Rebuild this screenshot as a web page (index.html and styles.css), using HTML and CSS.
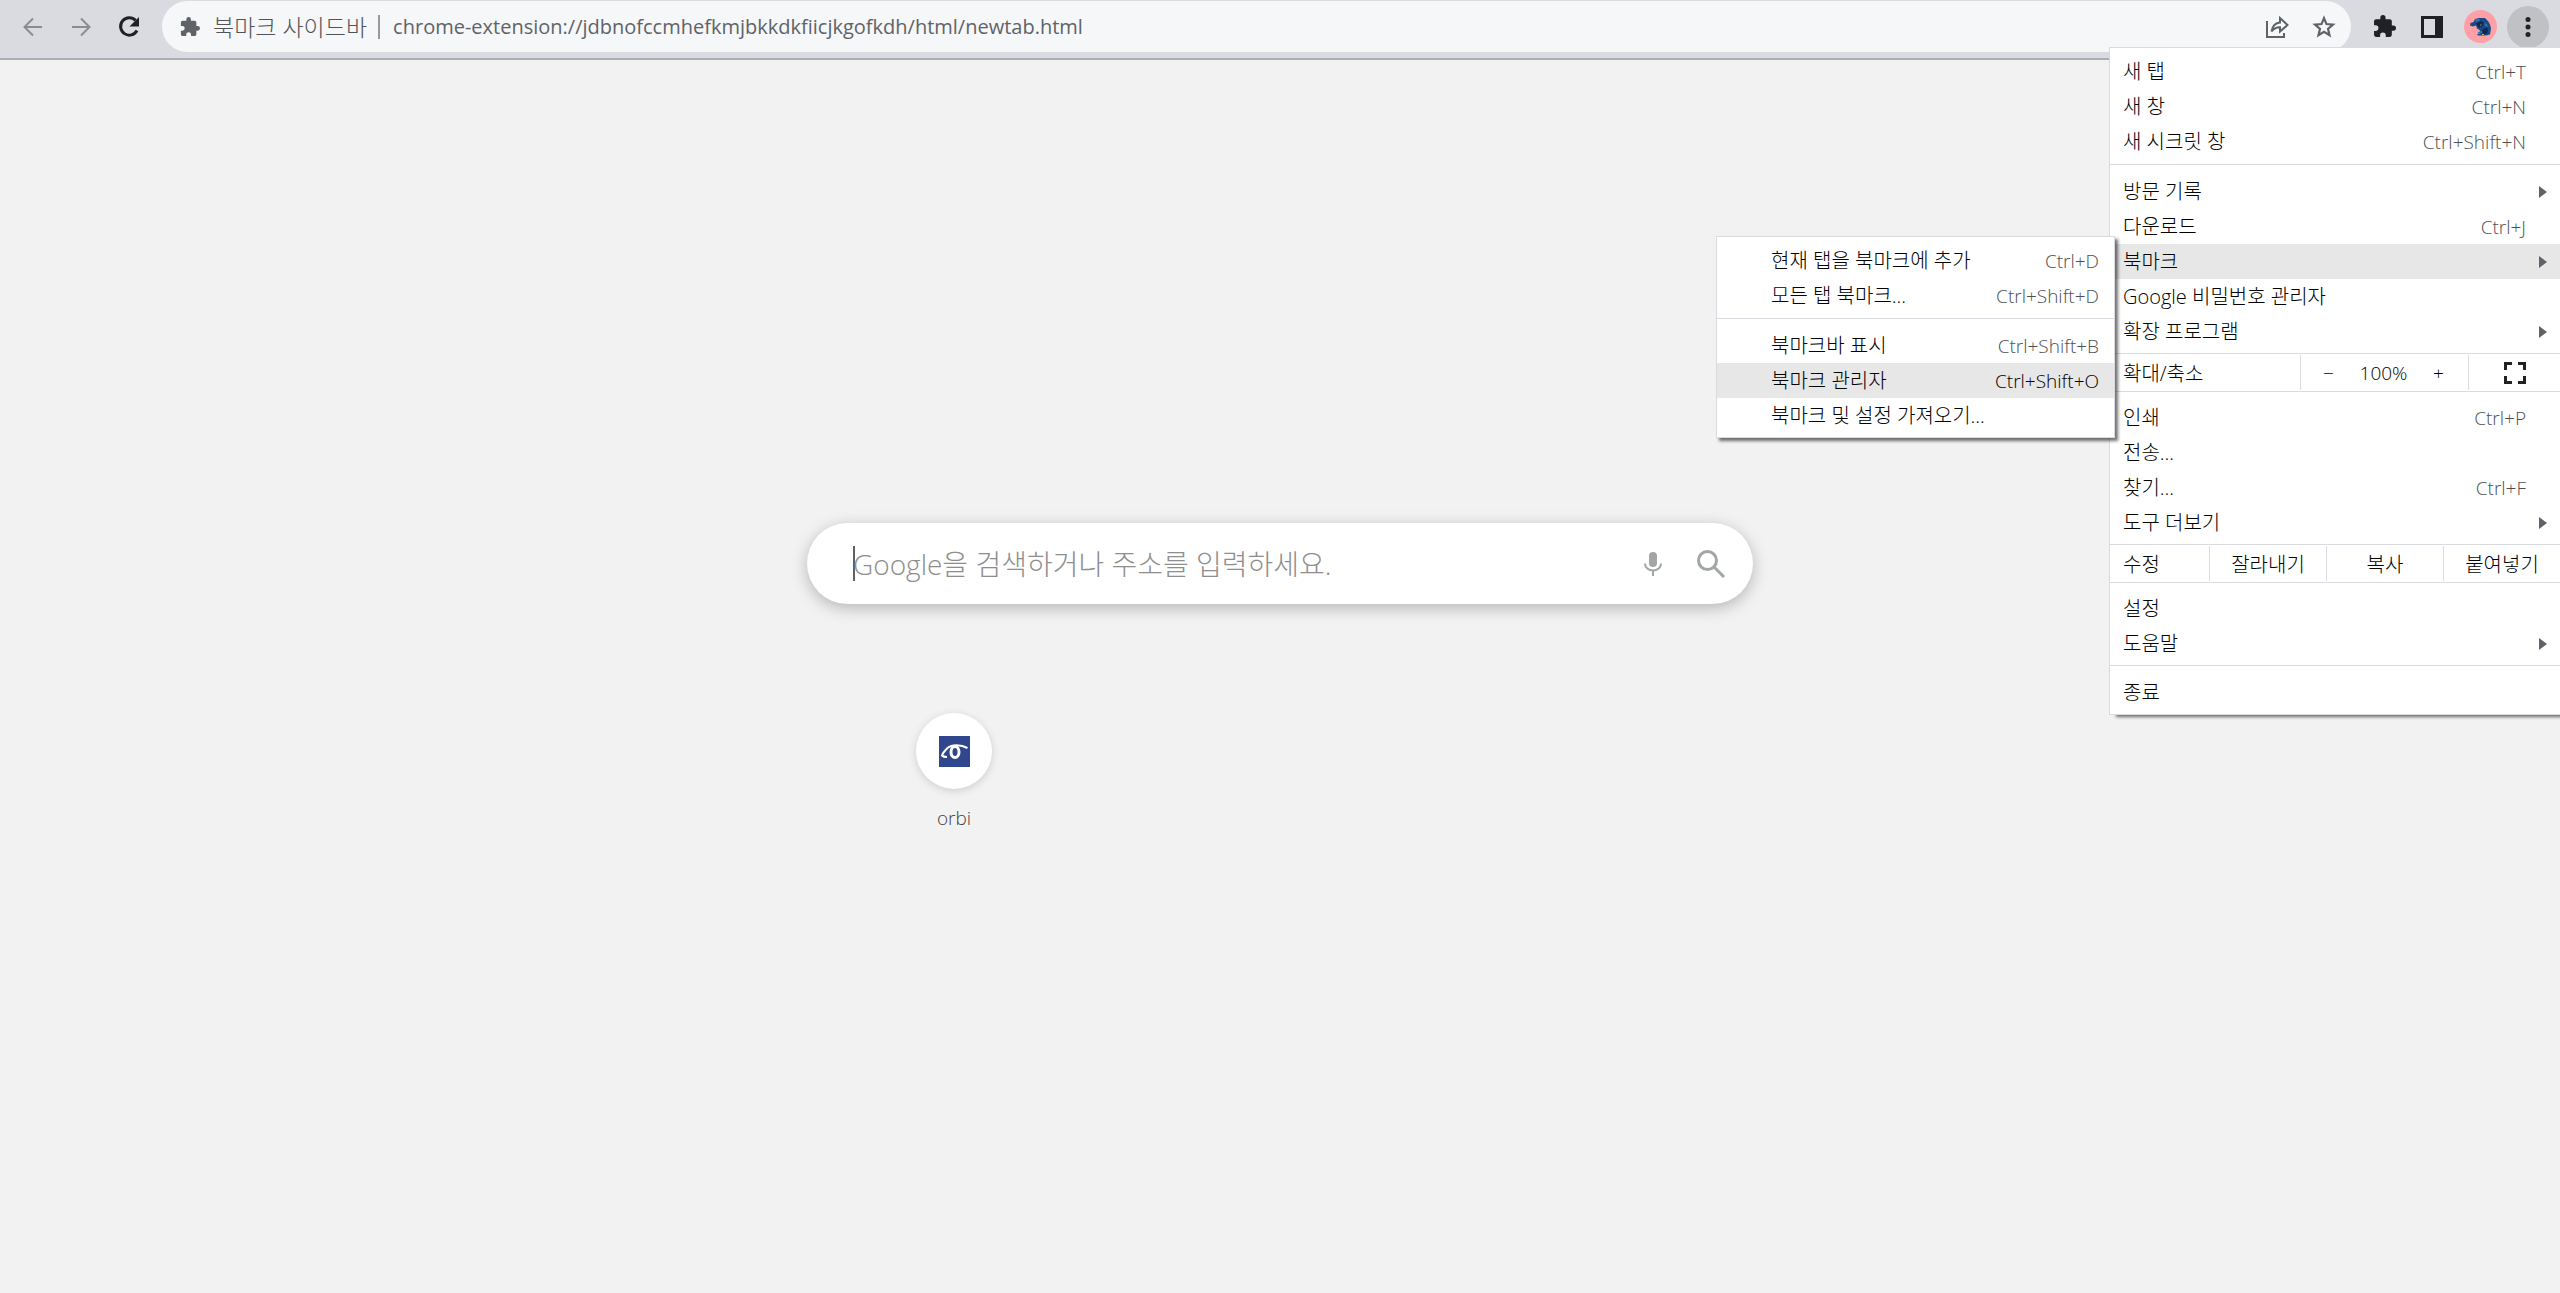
FILE: index.html
```html
<!DOCTYPE html>
<html lang="ko">
<head>
<meta charset="utf-8">
<title>북마크 사이드바</title>
<link rel="stylesheet" href="styles.css">
</head>
<body>
<header class="toolbar">
  <button class="nav-btn muted" aria-label="뒤로"><svg width="22" height="22" viewBox="0 0 22 22"><path d="M20 11H3M11 2.500L2.500 11l8.500 8.500"/></svg></button>
  <button class="nav-btn muted" aria-label="앞으로"><svg width="22" height="22" viewBox="0 0 22 22"><path d="M2 11h17M11 2.500l8.500 8.500-8.500 8.500"/></svg></button>
  <button class="nav-btn" aria-label="새로고침"><svg width="24" height="24" viewBox="0 0 24 24"><path class="reload-arc" d="M18.600 5.400A8.700 8.700 0 1 0 20 15.500"/><path class="solid" d="M22 2v9.500h-9.500z"/></svg></button>
  <div class="omnibox">
    <svg class="ext-icon" width="20" height="20" viewBox="1 1 22 22"><path d="M20.500 11H19V7c0-1.100-.9-2-2-2h-4V3.500a2.500 2.500 0 0 0-5 0V5H4c-1.100 0-2 .9-2 2v3.800h1.500a2.700 2.700 0 0 1 0 5.400H2V20c0 1.100.9 2 2 2h3.800v-1.500a2.700 2.700 0 0 1 5.400 0V22H17c1.100 0 2-.9 2-2v-4h1.500a2.500 2.500 0 0 0 0-5z"/></svg>
    <span class="ext-name">북마크 사이드바</span>
    <span class="divider"></span>
    <input class="url" aria-label="주소" value="chrome-extension://jdbnofccmhefkmjbkkdkfiicjkgofkdh/html/newtab.html">
    <button class="omni-btn" aria-label="공유"><svg width="24" height="24" viewBox="0 0 24 24"><path d="M2 6v16h17v-4M6.500 16.500C7.500 11 10 8 15 7.600V3l7.500 7-7.500 6.500V12.300C11 12.200 8.500 13.800 6.500 16.500z"/></svg></button>
    <button class="omni-btn" aria-label="북마크 추가"><svg width="26" height="26" viewBox="0 0 24 24"><path d="M12 3.800l2.300 5.500 6 .5-4.600 3.900 1.400 5.800-5.100-3.100-5.100 3.100 1.400-5.800-4.600-3.900 6-.5z"/></svg></button>
  </div>
  <div class="actions">
    <button class="action" aria-label="확장 프로그램"><svg width="23" height="23" viewBox="1 1 22 22"><path d="M20.500 11H19V7c0-1.100-.9-2-2-2h-4V3.500a2.500 2.500 0 0 0-5 0V5H4c-1.100 0-2 .9-2 2v3.800h1.500a2.700 2.700 0 0 1 0 5.400H2V20c0 1.100.9 2 2 2h3.800v-1.500a2.700 2.700 0 0 1 5.400 0V22H17c1.100 0 2-.9 2-2v-4h1.500a2.500 2.500 0 0 0 0-5z"/></svg></button>
    <button class="action" aria-label="측면 패널"><svg width="22" height="22" viewBox="0 0 22 22"><path fill-rule="evenodd" d="M0 0h22v22H0zM3 3v16h11V3z"/></svg></button>
    <button class="action" aria-label="프로필"><svg width="33" height="33" viewBox="0 0 33 33"><circle cx="16.500" cy="16.500" r="16.500" fill="#ff9fa6"/><path fill="#174a86" d="M6.500 13l3-1 1.500-3 4-1h6l3 3 2 3.500 1 4-1 6-4 1h-8l-1-1.500 4-1-1.500-3-2.500-1.500-1-3-3 1-3-1z"/><path fill="#0d2a50" d="M12 13l5-2 3 2-1 3-4 2zM18 20l5-3 1 4-1 3h-4z"/><path fill="#2b70b8" d="M11 9.500l4-1 1 2-4 2zM20 13l3 1 1 3-3-1zM14 22l4-1v2h-4z"/><path fill="#e0a92e" d="M16 15l2-1-1.500 2zM18 24h2v1h-2z"/></svg></button>
    <button class="action more" aria-label="Chrome 맞춤설정 및 제어"><svg width="6" height="22" viewBox="0 0 6 22"><circle cx="3" cy="3.500" r="2.500"/><circle cx="3" cy="11" r="2.500"/><circle cx="3" cy="18.500" r="2.500"/></svg></button>
  </div>
</header>

<main class="newtab">
  <form class="search" role="search">
    <input class="search-input" aria-label="검색" placeholder="Google을 검색하거나 주소를 입력하세요." autofocus>
    <button type="button" class="search-btn" aria-label="음성 검색"><svg width="18" height="26" viewBox="0 0 18 26"><rect x="5" y="1" width="8" height="15" rx="4"/><path class="line" d="M1 12.500a8 7 0 0 0 16 0M9 19.500V25"/></svg></button>
    <button type="button" class="search-btn" aria-label="검색"><svg width="30" height="30" viewBox="0 0 30 30"><circle class="lens" cx="11.500" cy="11.500" r="9"/><path class="lens" d="M18 18l10 10"/></svg></button>
  </form>
  <nav class="tiles">
    <a class="tile" href="#">
      <span class="tile-disc"><svg width="31" height="31" viewBox="0 0 31 31"><path fill="#30478e" d="M0 0h31v31H0z"/><path class="eye-line" d="M28.500 12C22 8.500 13 8 8.500 12 5.500 15 3.500 18 3 19.500c1 1.200 3 1.500 5 1.500"/><ellipse class="eye-ball" cx="16" cy="16" rx="4" ry="5.500"/></svg></span>
      <span class="tile-name">orbi</span>
    </a>
  </nav>
</main>

<nav class="menu" aria-label="Chrome 메뉴">
  <div class="group">
    <button class="item">새 탭<kbd>Ctrl+T</kbd></button>
    <button class="item">새 창<kbd>Ctrl+N</kbd></button>
    <button class="item">새 시크릿 창<kbd>Ctrl+Shift+N</kbd></button>
  </div>
  <div class="group">
    <button class="item parent">방문 기록</button>
    <button class="item">다운로드<kbd>Ctrl+J</kbd></button>
    <div class="branch">
      <button class="item parent active">북마크</button>
      <div class="menu submenu">
        <div class="group">
          <button class="item">현재 탭을 북마크에 추가<kbd>Ctrl+D</kbd></button>
          <button class="item">모든 탭 북마크...<kbd>Ctrl+Shift+D</kbd></button>
        </div>
        <div class="group">
          <button class="item">북마크바 표시<kbd>Ctrl+Shift+B</kbd></button>
          <button class="item active">북마크 관리자<kbd>Ctrl+Shift+O</kbd></button>
          <button class="item">북마크 및 설정 가져오기...</button>
        </div>
      </div>
    </div>
    <button class="item">Google 비밀번호 관리자</button>
    <button class="item parent">확장 프로그램</button>
  </div>
  <div class="strip">
    <span class="strip-label">확대/축소</span>
    <div class="zoom">
      <button class="strip-btn" aria-label="축소">−</button>
      <span>100%</span>
      <button class="strip-btn" aria-label="확대">+</button>
    </div>
    <button class="strip-btn fullscreen" aria-label="전체화면"><svg width="22" height="22" viewBox="0 0 22 22"><path d="M1.500 8V1.500H8M14 1.500h6.500V8M20.500 14v6.500H14M8 20.500H1.500V14"/></svg></button>
  </div>
  <div class="group">
    <button class="item">인쇄<kbd>Ctrl+P</kbd></button>
    <button class="item">전송...</button>
    <button class="item">찾기...<kbd>Ctrl+F</kbd></button>
    <button class="item parent">도구 더보기</button>
  </div>
  <div class="strip">
    <span class="strip-label">수정</span>
    <button class="strip-btn edit">잘라내기</button>
    <button class="strip-btn edit">복사</button>
    <button class="strip-btn edit">붙여넣기</button>
  </div>
  <div class="group">
    <button class="item">설정</button>
    <button class="item parent">도움말</button>
  </div>
  <div class="group">
    <button class="item">종료</button>
  </div>
</nav>
</body>
</html>
```
FILE: styles.css
```css
* { box-sizing: border-box; }

body {
  margin: 0;
  min-height: 100vh;
  background: #f2f2f2;
  color: #202124;
  font-family: "Open Sans", "Noto Sans CJK KR", sans-serif;
  font-size: 19px;
}

button, input, kbd { font: inherit; color: inherit; }
button { padding: 0; border: 0; background: none; }
input { border: 0; outline: 0; background: none; padding: 0; }
svg { display: block; }

/* Browser toolbar */
.toolbar {
  display: flex;
  align-items: flex-start;
  height: 60px;
  padding: 1px 11px 0 9px;
  background: #dadbe0;
  border-bottom: 2px solid #adaeb3;
}
.nav-btn {
  display: grid;
  place-items: center;
  width: 48px;
  height: 51px;
  fill: none;
  stroke: #202124;
  stroke-width: 2;
}
.nav-btn.muted { stroke: #8b8c90; }
.nav-btn .reload-arc { stroke-width: 3; }
.nav-btn .solid { fill: #202124; stroke: none; }

.omnibox {
  flex: 1;
  display: flex;
  align-items: center;
  height: 51px;
  margin-left: 9px;
  padding: 0 4px 0 18px;
  border-radius: 26px;
  background: #f6f7f9;
  color: #5f6368;
  font-size: 20px;
}
.ext-icon { fill: #5f6368; }
.ext-name { margin-left: 13px; color: #505357; font-size: 23px; font-weight: 300; line-height: 26px; }
.divider { width: 2px; height: 24px; margin: 0 13px 0 11px; background: #97999c; }
.url { flex: 1; min-width: 0; }
.omni-btn {
  display: grid;
  place-items: center;
  width: 47px;
  height: 47px;
  fill: none;
  stroke: #5f6368;
  stroke-width: 2;
}

.actions { display: flex; align-items: center; gap: 6px; height: 51px; margin-left: 12px; }
.action {
  display: grid;
  place-items: center;
  width: 42px;
  height: 42px;
  border-radius: 50%;
  fill: #202124;
}
.more { background: #c0c1c5; }

/* New tab page */
.newtab {
  display: flex;
  flex-direction: column;
  align-items: center;
  padding-top: 463px;
}
.search {
  display: flex;
  align-items: center;
  width: 946px;
  max-width: 90%;
  height: 81px;
  padding: 0 13px 0 46px;
  border-radius: 41px;
  background: #fff;
  box-shadow: 0 4px 16px rgba(0, 0, 0, .25);
}
.search-input {
  flex: 1;
  min-width: 0;
  height: 58px;
  background: linear-gradient(#606164, #606164) left center / 2px 35px no-repeat;
  caret-color: transparent;
  font-size: 28px;
  font-weight: 300;
}
.search-input::placeholder { color: #8e8e8e; opacity: 1; }
.search-btn {
  display: grid;
  place-items: center;
  width: 58px;
  height: 58px;
  fill: #a3a6a6;
}
.search-btn .line { fill: none; stroke: #a3a6a6; stroke-width: 2; }
.search-btn .lens { fill: none; stroke: #a3a6a6; stroke-width: 3; }

.tiles { width: 946px; max-width: 90%; padding: 109px 72px 0; }
.tile {
  display: flex;
  flex-direction: column;
  align-items: center;
  width: 150px;
  gap: 16px;
  color: #404040;
  font-weight: 300;
  text-decoration: none;
}
.tile-disc {
  display: grid;
  place-items: center;
  width: 76px;
  height: 76px;
  border-radius: 50%;
  background: #fff;
  box-shadow: 0 2px 8px rgba(0, 0, 0, .15);
}
.eye-line { fill: none; stroke: #fff; stroke-width: 2; }
.eye-ball { fill: none; stroke: #fff; stroke-width: 3; }
.tile-name { line-height: 26px; }

/* Drop-down menus */
.menu {
  position: absolute;
  top: 47px;
  right: 0;
  width: 451px;
  border: 1px solid #dadbe0;
  border-right: 0;
  background: #fff;
  box-shadow: 6px 3px 3px -1px rgba(0, 0, 0, .55);
  color: #000;
  font-size: 20px;
  font-weight: 300;
}
.group { padding: 8px 0 4px; }
.group:first-child { padding: 6px 0 5px; }
.group + .group { padding-top: 9px; }
.group + .group, .strip, .strip + .group { border-top: 1px solid #dadbe0; }
.item {
  display: flex;
  align-items: center;
  justify-content: space-between;
  width: 100%;
  height: 35px;
  padding: 0 34px 0 13px;
  line-height: 28px;
  text-align: left;
}
.item kbd { color: #4c5054; font-size: 19px; }
.item.active { background: #e7e7e7; }
.item.active kbd { color: #000; }
.parent { padding-right: 13px; }
.parent::after {
  content: "";
  border: 6px solid transparent;
  border-left: 8px solid #5f6368;
  border-right: 0;
}
.branch { position: relative; }
.submenu {
  top: -8px;
  right: calc(100% - 5px);
  width: 399px;
  border-right: 1px solid #dadbe0;
  box-shadow: 3px 3px 3px rgba(0, 0, 0, .55);
}
.submenu .item { padding: 0 15px 0 54px; }

.strip { display: flex; align-items: center; height: 38px; }
.strip-label { flex: 1; padding-left: 13px; }
.strip-btn { display: grid; place-items: center; height: 35px; }
.zoom {
  display: grid;
  grid-template-columns: 55px 55px 55px;
  align-items: center;
  justify-items: center;
  width: 168px;
  height: 35px;
  border-left: 1px solid #dadbe0;
  font-size: 19px;
}
.fullscreen {
  width: 92px;
  border-left: 1px solid #dadbe0;
  fill: none;
  stroke: #202124;
  stroke-width: 3;
}
.edit { width: 117px; border-left: 1px solid #dadbe0; }
```
